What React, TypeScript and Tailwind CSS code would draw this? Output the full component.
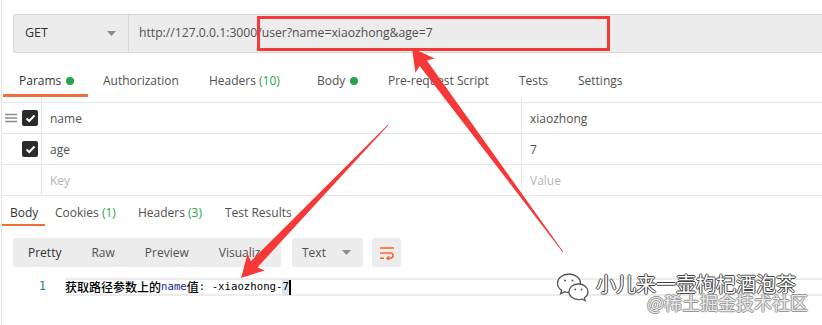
import React from "react";

function arrowPts(
  tx: number, ty: number, hx: number, hy: number,
  headLen: number, headHalf: number, shaftHalf: number, tailHalf: number
) {
  const dx = hx - tx, dy = hy - ty;
  const L = Math.hypot(dx, dy);
  const ux = dx / L, uy = dy / L;
  const nx = -uy, ny = ux;
  const bx = hx - ux * headLen, by = hy - uy * headLen;
  const jx = bx + ux * 3, jy = by + uy * 3;
  const p = [
    [hx, hy],
    [bx + nx * headHalf, by + ny * headHalf],
    [jx + nx * shaftHalf, jy + ny * shaftHalf],
    [tx + nx * tailHalf, ty + ny * tailHalf],
    [tx - nx * tailHalf, ty - ny * tailHalf],
    [jx - nx * shaftHalf, jy - ny * shaftHalf],
    [bx - nx * headHalf, by - ny * headHalf],
  ];
  return p.map((q) => q.map((v) => v.toFixed(1)).join(",")).join(" ");
}

const Check = () => (
  <div className="w-[16px] h-[16px] rounded-[2px] bg-[#2b2b2b] flex items-center justify-center">
    <svg width="11" height="9" viewBox="0 0 11 9">
      <path d="M1.5 4.5 L4.2 7 L9.5 1.5" fill="none" stroke="#fff" strokeWidth="2" />
    </svg>
  </div>
);

const Dot = () => <span className="inline-block w-[8px] h-[8px] rounded-full bg-[#26a447] ml-[5px]" />;

export default function App() {
  return (
    <div className="relative w-[822px] h-[325px] overflow-hidden bg-white font-['Open_Sans',sans-serif] text-[#505050]">
      <div className="ml-[1px] border-l border-[#e6e6e6] h-full flex flex-col">
        {/* URL bar */}
        <div className="pt-[14px] pl-[11px]">
          <div className="flex h-[39px] bg-[#ececec] border border-[#d6d6d6] border-r-0 rounded-l-[3px]">
            <div className="w-[115px] flex items-center justify-between pl-[11px] pr-[12px] border-r border-[#d6d6d6] text-[12.5px] text-[#333]">
              <span>GET</span>
              <svg width="9" height="5" viewBox="0 0 9 5"><path d="M0 0h9L4.5 5z" fill="#8a8a8a" /></svg>
            </div>
            <div className="flex items-center pl-[10px] text-[12.2px] text-[#505050]">
              http://127.0.0.1:3000/user?name=xiaozhong&amp;age=7
            </div>
          </div>
        </div>

        {/* Request tabs */}
        <div className="flex h-[44px] text-[12px] leading-[16px] pl-[1px]">
          <div className="w-[85px] pl-[16px] pt-[20px] border-b-[3px] border-[#f26b3a] text-[#333]">
            <div className="flex items-center h-[16px]"><span>Params</span><Dot /></div>
          </div>
          <div className="w-[106px] pl-[15px] pt-[20px]">Authorization</div>
          <div className="w-[108px] pl-[15px] pt-[20px]">Headers <span className="text-[#26a447]">(10)</span></div>
          <div className="w-[71px] pl-[15px] pt-[20px]">
            <div className="flex items-center h-[16px]"><span>Body</span><Dot /></div>
          </div>
          <div className="w-[131px] pl-[15px] pt-[20px]">Pre-request Script</div>
          <div className="w-[59px] pl-[15px] pt-[20px]">Tests</div>
          <div className="pl-[15px] pt-[20px]">Settings</div>
        </div>

        {/* Params table */}
        <div className="text-[12px] border-b border-[#e6e6e6]">
          <div className="flex h-[6px] border-b border-[#e6e6e6]">
            <div className="w-[40px] border-r border-[#e6e6e6]" />
            <div className="w-[480px] border-r border-[#e6e6e6]" />
          </div>
          <div className="flex h-[31px] border-b border-[#e6e6e6]">
            <div className="w-[40px] border-r border-[#e6e6e6] flex items-center pl-[3px] gap-[5px]">
              <svg width="12" height="10" viewBox="0 0 12 10">
                <path d="M0 1.5h12M0 5h12M0 8.5h12" stroke="#8c8c8c" strokeWidth="1.6" />
              </svg>
              <Check />
            </div>
            <div className="w-[480px] border-r border-[#e6e6e6] flex items-center pl-[8px] pt-[1px] text-[#505050]">name</div>
            <div className="flex items-center pl-[8px] pt-[1px] text-[#505050]">xiaozhong</div>
          </div>
          <div className="flex h-[31px] border-b border-[#e6e6e6]">
            <div className="w-[40px] border-r border-[#e6e6e6] flex items-center pl-[20px]">
              <Check />
            </div>
            <div className="w-[480px] border-r border-[#e6e6e6] flex items-center pl-[8px] pt-[1px] text-[#505050]">age</div>
            <div className="flex items-center pl-[8px] pt-[1px] text-[#505050]">7</div>
          </div>
          <div className="flex h-[30px]">
            <div className="w-[40px] border-r border-[#e6e6e6]" />
            <div className="w-[480px] border-r border-[#e6e6e6] flex items-center pl-[8px] pt-[1px] text-[#b5b5b5]">Key</div>
            <div className="flex items-center pl-[8px] pt-[1px] text-[#b5b5b5]">Value</div>
          </div>
        </div>

        {/* Response tabs */}
        <div className="flex h-[30px] text-[12px] leading-[16px]">
          <div className="w-[43px] pl-[8px] pt-[9px] border-b-2 border-[#f26b3a] text-[#333]">Body</div>
          <div className="w-[83px] pl-[10px] pt-[9px]">Cookies <span className="text-[#26a447]">(1)</span></div>
          <div className="w-[87px] pl-[10px] pt-[9px]">Headers <span className="text-[#26a447]">(3)</span></div>
          <div className="pl-[10px] pt-[9px]">Test Results</div>
        </div>

        {/* Toolbar */}
        <div className="flex items-center mt-[12px] pl-[11px] h-[29px] text-[12px]">
          <div className="w-[268px] h-full bg-[#ececec] rounded-[3px] flex items-center overflow-hidden whitespace-nowrap">
            <span className="px-[15px] text-[#333]">Pretty</span>
            <span className="px-[15px]">Raw</span>
            <span className="px-[15px]">Preview</span>
            <span className="px-[15px]">Visualize</span>
          </div>
          <div className="ml-[11px] w-[71px] h-full bg-[#ececec] rounded-[3px] flex items-center justify-between pl-[10px] pr-[12px]">
            <span>Text</span>
            <svg width="9" height="5" viewBox="0 0 9 5"><path d="M0 0h9L4.5 5z" fill="#8a8a8a" /></svg>
          </div>
          <div className="ml-[9px] w-[29px] h-full bg-[#ececec] rounded-[3px] flex items-center justify-center">
            <svg width="16" height="14" viewBox="0 0 16 14" fill="none" stroke="#f26b3a" strokeWidth="1.6">
              <path d="M1 2h14" />
              <path d="M1 7h10.5a2.6 2.6 0 0 1 0 5.2H8" />
              <path d="M10 10.2L8 12.2l2 2" />
              <path d="M1 12.2h4" />
            </svg>
          </div>
        </div>

        {/* Code line */}
        <div className="flex items-center mt-[11px] h-[18px]">
          <div className="w-[44px] text-right text-[11.5px] text-[#237893] font-['DejaVu_Sans_Mono',monospace]">1</div>
          <div className="ml-[19px] flex-1 h-full border-y-2 border-[#ececec] flex items-center font-['DejaVu_Sans_Mono','Noto_Sans_CJK_SC',monospace] text-[10.7px] text-black whitespace-nowrap">
            <span className="font-['Noto_Sans_CJK_SC',sans-serif] text-[12px] leading-[14px] font-medium">获取路径参数上的</span>
            <span className="text-[#1d1d8c]">name</span>
            <span className="font-['Noto_Sans_CJK_SC',sans-serif] text-[12px] leading-[14px] font-medium">值</span>
            <span>: -xiaozhong-</span>
            <span className="bg-[#d7e8f7]">7</span>
            <span className="inline-block w-[2px] h-[15px] bg-black" />
          </div>
        </div>
      </div>

      {/* Red annotation rectangle */}
      <div className="absolute left-[257px] top-[16px] w-[353px] h-[35px] border-[3px] border-[#f53838] pointer-events-none" />

      {/* Arrows */}
      <svg className="absolute inset-0 pointer-events-none" width="822" height="325">
        <polygon points={arrowPts(563, 252, 412, 48, 22, 12, 4.5, 0.4)} fill="#f53838" />
        <polygon points={arrowPts(388, 125, 241, 278, 22, 12, 4.5, 0.4)} fill="#f53838" />
      </svg>

      {/* Watermark */}
      <div className="absolute left-[556px] top-[272px] flex items-start pointer-events-none">
        <svg width="34" height="31" viewBox="0 0 34 31" fill="#fff" stroke="#555" strokeWidth="1.3">
          <path d="M13 2C6.5 2 1.5 6.2 1.5 11.3c0 2.9 1.6 5.4 4.1 7.1l-1 3.4 3.9-2c1.4.5 2.9.7 4.5.7 6.5 0 11.5-4.2 11.5-9.2S19.5 2 13 2z" />
          <path d="M22.5 12c-5.5 0-9.6 3.5-9.6 7.8s4.1 7.8 9.6 7.8c1.2 0 2.4-.2 3.5-.6l3.2 1.7-.8-2.9c2.2-1.4 3.6-3.6 3.6-6 0-4.3-4.1-7.8-9.5-7.8z" />
          <circle cx="9" cy="8.5" r="1" fill="#555" stroke="none" />
          <circle cx="16.5" cy="8.5" r="1" fill="#555" stroke="none" />
          <circle cx="19.3" cy="17.5" r="0.9" fill="#555" stroke="none" />
          <circle cx="25.5" cy="17.5" r="0.9" fill="#555" stroke="none" />
        </svg>
        <div className="ml-[6px] flex flex-col items-end font-['Noto_Sans_CJK_SC',sans-serif]">
          <div className="text-[20px] leading-[24px] text-white [text-shadow:1px_0_0_#444,-1px_0_0_#444,0_1px_0_#444,0_-1px_0_#444]">小儿来一壶枸杞酒泡茶</div>
          <div className="-mt-[4px] mr-[-12px] text-[18px] leading-[20px] text-[#e8e8e8] [text-shadow:1px_0_0_#999,-1px_0_0_#999,0_1px_0_#999,0_-1px_0_#999]">@稀土掘金技术社区</div>
        </div>
      </div>
    </div>
  );
}
